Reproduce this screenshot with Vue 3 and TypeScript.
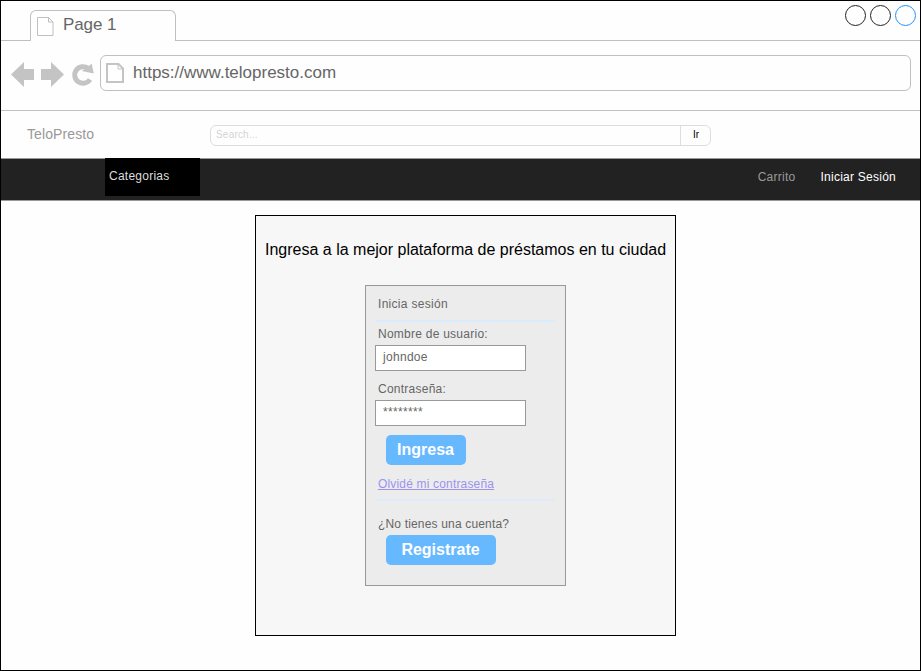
<script setup lang="ts">
import { ref } from 'vue'

const address = ref('https://www.telopresto.com')
const user = ref('johndoe')
const password = ref('********')
const windowButtons = ['dark', 'dark', 'blue']
</script>

<template>
  <div class="window">
    <header class="tabs">
      <div class="tab">
        <svg class="page-icon" width="17" height="20" viewBox="0 0 17 20">
          <path d="M.5.5h11l4.500 4.500v13.500h-15.500z M11.500.5v4.500h4.500" fill="#fff" stroke="#c0c0c0" />
        </svg>
        <span>Page 1</span>
      </div>
      <div class="buttons">
        <svg v-for="(tone, i) in windowButtons" :key="i" width="21" height="21" viewBox="0 0 21 21">
          <circle cx="10.500" cy="10.500" r="10" fill="#fff" :class="tone" />
        </svg>
      </div>
    </header>

    <div class="toolbar">
      <svg class="nav-icons" width="84" height="28" viewBox="0 0 84 28" fill="#c4c4c4">
        <path d="M0 14.500 13 2v7h10v11h-10v7z" />
        <path d="M53 14.500 40 2v7h-10v11h10v7z" />
        <path
          d="M79 19.500A8.300 8.300 0 1 1 77.200 8.500"
          fill="none"
          stroke="#c4c4c4"
          stroke-width="5"
        />
        <path d="M80.700 3.800 82.800 13.500 70.800 11z" />
      </svg>
      <div class="address">
        <svg width="18" height="20" viewBox="0 0 18 20">
          <path d="M1 1h11.500l4.500 4.500v13.500h-16z" fill="#fff" stroke="#c4c4c4" stroke-width="2" />
          <path d="M12 1v5h5" fill="none" stroke="#c4c4c4" />
        </svg>
        <span>{{ address }}</span>
      </div>
    </div>

    <div class="site-head">
      <span class="brand">TeloPresto</span>
      <div class="search">
        <span class="placeholder">Search...</span>
        <span class="go">Ir</span>
      </div>
    </div>

    <nav class="menu">
      <div class="category">Categorias</div>
      <div class="links">
        <span class="muted">Carrito</span>
        <span>Iniciar Sesión</span>
      </div>
    </nav>

    <main class="panel">
      <h1>Ingresa a la mejor plataforma de préstamos en tu ciudad</h1>
      <form class="login" @submit.prevent>
        <div class="heading">Inicia sesión</div>
        <div class="rule"></div>
        <label class="name-label">Nombre de usuario:</label>
        <div class="field">{{ user }}</div>
        <label class="pass-label">Contraseña:</label>
        <div class="field pass">{{ password }}</div>
        <button class="enter" type="submit">Ingresa</button>
        <a class="forgot">Olvidé mi contraseña</a>
        <div class="rule short"></div>
        <div class="question">¿No tienes una cuenta?</div>
        <button class="register" type="button">Registrate</button>
      </form>
    </main>
  </div>
</template>

<style>
body {
  margin: 0;
  background: #fff;
}
</style>

<style scoped>
.window {
  box-sizing: border-box;
  width: 921px;
  height: 671px;
  border: 1px solid #000;
  background: #fefefe;
  overflow: hidden;
  font-family: "Liberation Sans", Arial, sans-serif;
  font-size: 12px;
  line-height: 20px;
  white-space: nowrap;
  color: #666;
}
.window * {
  box-sizing: border-box;
}
svg {
  display: block;
  flex: none;
}
.tabs {
  display: flex;
  justify-content: space-between;
  height: 40px;
  padding: 9px 4px 0 29px;
  border-bottom: 1px solid #c0c0c0;
}
.tab {
  display: flex;
  width: 146px;
  height: 31px;
  padding: 6px 0 0 6px;
  gap: 9px;
  border: 1px solid #c0c0c0;
  border-bottom: 0;
  border-radius: 6px 6px 0 0;
  background: #fefefe;
  font-size: 17px;
  line-height: 16px;
  letter-spacing: -0.1px;
}
.buttons {
  display: flex;
  gap: 4px;
  margin-top: -5px;
}
.dark {
  stroke: #222;
}
.blue {
  stroke: #1e90ff;
}
.toolbar {
  display: flex;
  height: 70px;
  padding: 14px 9px 0 10px;
  border-bottom: 1px solid #c0c0c0;
}
.nav-icons {
  margin-top: 5px;
}
.address {
  display: flex;
  flex: 1;
  height: 36px;
  margin-left: 5px;
  padding: 7px 0 0 5px;
  gap: 9px;
  border: 1px solid #c0c0c0;
  border-radius: 6px;
  font-size: 17px;
}
.address span {
  line-height: 19px;
}
.site-head {
  display: flex;
  height: 47px;
  padding-left: 26px;
}
.brand {
  width: 183px;
  padding-top: 13px;
  color: #999;
  font-size: 14px;
  letter-spacing: 0.1px;
}
.search {
  display: flex;
  width: 501px;
  height: 21px;
  margin-top: 14px;
  border: 1px solid #ddd;
  border-radius: 6px;
  font-size: 10px;
  line-height: 18px;
}
.placeholder {
  flex: 1;
  padding-left: 5px;
  color: #d5d5d5;
  letter-spacing: 0.2px;
}
.go {
  width: 30px;
  padding-left: 1px;
  border-left: 1px solid #ddd;
  color: #000;
  text-align: center;
}
.menu {
  display: flex;
  justify-content: space-between;
  height: 43px;
  padding: 0 24px 0 104px;
  border-top: 1px solid #999;
  border-bottom: 1px solid #999;
  background: #222;
  color: #fff;
  letter-spacing: 0.25px;
}
.category {
  width: 95px;
  height: 38px;
  margin-top: -1px;
  padding: 8px 0 0 4px;
  background: #000;
  color: #ddd;
}
.links {
  display: flex;
  gap: 25px;
  padding-top: 8px;
}
.muted {
  color: #999;
}
.panel {
  width: 421px;
  height: 421px;
  margin: 14px 0 0 254px;
  border: 1px solid #000;
  background: #f7f7f7;
}
h1 {
  margin: 24px 0 25px 9px;
  color: #000;
  font-size: 16px;
  font-weight: 400;
  line-height: 20px;
}
.login {
  display: flex;
  flex-direction: column;
  align-items: flex-start;
  width: 201px;
  height: 301px;
  margin-left: 109px;
  padding: 8px 0 0 9px;
  border: 1px solid #999;
  background: #ececec;
}
.heading,
.name-label,
.pass-label,
.forgot,
.question {
  padding-left: 3px;
  letter-spacing: 0.25px;
}
.heading {
  letter-spacing: 0.3px;
}
.rule {
  width: 180px;
  height: 2px;
  margin: 6px 0 2px 1px;
  background: #d9ebfc;
}
.name-label {
  height: 21px;
}
.field {
  width: 151px;
  height: 26px;
  padding: 1px 0 0 7px;
  border: 1px solid #999;
  background: #fff;
  letter-spacing: 0.3px;
}
.pass-label {
  height: 21px;
  margin-top: 8px;
}
.field.pass {
  letter-spacing: 0.33px;
}
button {
  height: 30px;
  margin: 0 0 0 10.500px;
  padding: 0 0 1px;
  border: 0;
  border-radius: 5px;
  background: #66b9ff;
  color: #fff;
  font: bold 16px/29px "Liberation Sans", Arial, sans-serif;
}
.enter {
  width: 80px;
  margin-top: 9px;
}
.forgot {
  margin-top: 9px;
  padding: 0;
  margin-left: 3px;
  color: #9b93ee;
  letter-spacing: 0.17px;
  text-decoration: underline;
}
.rule.short {
  width: 179px;
  margin: 5px 0 13px 1px;
  background: #ddebfa;
}
.question {
  height: 21px;
  letter-spacing: 0.17px;
}
.register {
  width: 110px;
}
</style>
